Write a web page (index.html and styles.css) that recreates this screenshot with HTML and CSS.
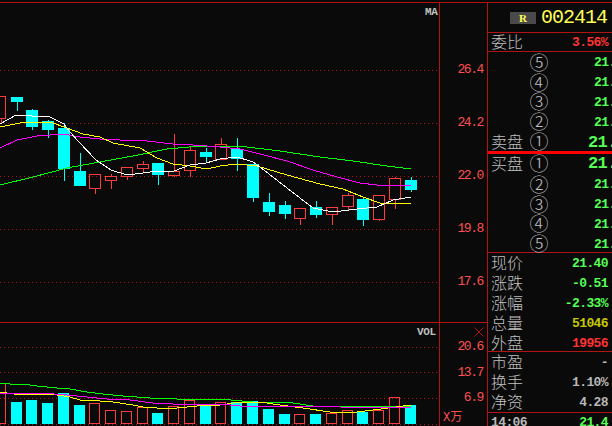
FILE: index.html
```html
<!DOCTYPE html>
<html lang="zh">
<head>
<meta charset="utf-8">
<title>002414</title>
<link rel="stylesheet" href="styles.css">
</head>
<body>
<div class="terminal">
  <div class="charts">
    <svg class="plot" width="439" height="423" viewBox="0 3 439 423">
      <g class="grid">
        <path d="M0 70.5H437M0 123.5H437M0 176.5H437M0 229.5H437M0 282.5H437"/>
        <path d="M0 347.5H437M0 372.5H437M0 398.5H437M0 424.5H437"/>
      </g>
      <path class="divider" d="M0 322.5H439"/>
      <g class="candles">
        <rect class="up" x="-6.5" y="96.5" width="12" height="22"/><line class="wick-up" x1="1.5" y1="118" x2="1.5" y2="123"/>
        <rect class="down" x="11" y="97" width="12" height="5"/><line class="wick-down" x1="17.5" y1="102" x2="17.5" y2="111"/>
        <rect class="down" x="26" y="110" width="12" height="17"/><line class="wick-down" x1="32.5" y1="109" x2="32.5" y2="130"/>
        <rect class="down" x="42" y="121" width="12" height="9"/><line class="wick-down" x1="48.5" y1="120" x2="48.5" y2="138"/>
        <rect class="down" x="58" y="128" width="12" height="41"/><line class="wick-down" x1="64.5" y1="123" x2="64.5" y2="181"/>
        <rect class="down" x="74" y="171" width="12" height="15"/><line class="wick-down" x1="80.5" y1="153" x2="80.5" y2="186"/>
        <rect class="up" x="89.5" y="174.5" width="11" height="14"/><line class="wick-up" x1="95.5" y1="189" x2="95.5" y2="194"/>
        <rect class="up" x="105.5" y="176.5" width="11" height="4"/><line class="wick-up" x1="111.5" y1="174" x2="111.5" y2="176"/><line class="wick-up" x1="111.5" y1="181" x2="111.5" y2="189"/>
        <rect class="up" x="121.5" y="167.5" width="11" height="9"/><line class="wick-up" x1="127.5" y1="177" x2="127.5" y2="180"/>
        <rect class="up" x="137.5" y="164.5" width="11" height="4"/><line class="wick-up" x1="143.5" y1="161" x2="143.5" y2="164"/><line class="wick-up" x1="143.5" y1="169" x2="143.5" y2="172"/>
        <rect class="down" x="152" y="163" width="12" height="12"/><line class="wick-down" x1="158.5" y1="175" x2="158.5" y2="185"/>
        <rect class="up" x="168.5" y="171.5" width="11" height="4"/><line class="wick-up" x1="174.5" y1="134" x2="174.5" y2="171"/><line class="wick-up" x1="174.5" y1="176" x2="174.5" y2="177"/>
        <rect class="up" x="184.5" y="150.5" width="11" height="20"/><line class="wick-up" x1="190.5" y1="146" x2="190.5" y2="150"/><line class="wick-up" x1="190.5" y1="171" x2="190.5" y2="177"/>
        <rect class="down" x="200" y="152" width="12" height="5"/><line class="wick-down" x1="206.5" y1="148" x2="206.5" y2="162"/>
        <rect class="up" x="215.5" y="144.5" width="11" height="15"/><line class="wick-up" x1="221.5" y1="138" x2="221.5" y2="144"/>
        <rect class="down" x="231" y="149" width="12" height="10"/><line class="wick-down" x1="237.5" y1="138" x2="237.5" y2="171"/>
        <rect class="down" x="247" y="164" width="12" height="34"/><line class="wick-down" x1="253.5" y1="198" x2="253.5" y2="202"/>
        <rect class="down" x="263" y="202" width="12" height="10"/><line class="wick-down" x1="269.5" y1="193" x2="269.5" y2="216"/>
        <rect class="down" x="279" y="205" width="12" height="9"/><line class="wick-down" x1="285.5" y1="201" x2="285.5" y2="219"/>
        <rect class="up" x="294.5" y="208.5" width="11" height="10"/><line class="wick-up" x1="300.5" y1="219" x2="300.5" y2="225"/>
        <rect class="down" x="310" y="207" width="12" height="8"/><line class="wick-down" x1="316.5" y1="201" x2="316.5" y2="218"/>
        <rect class="up" x="326.5" y="207.5" width="11" height="7"/><line class="wick-up" x1="332.5" y1="215" x2="332.5" y2="225"/>
        <rect class="up" x="342.5" y="195.5" width="11" height="11"/><line class="wick-up" x1="348.5" y1="193" x2="348.5" y2="195"/><line class="wick-up" x1="348.5" y1="207" x2="348.5" y2="211"/>
        <rect class="down" x="357" y="199" width="12" height="21"/><line class="wick-down" x1="363.5" y1="197" x2="363.5" y2="226"/>
        <rect class="up" x="373.5" y="195.5" width="11" height="24"/><line class="wick-up" x1="379.5" y1="220" x2="379.5" y2="221"/>
        <rect class="up" x="389.5" y="178.5" width="11" height="21"/><line class="wick-up" x1="395.5" y1="177" x2="395.5" y2="178"/><line class="wick-up" x1="395.5" y1="200" x2="395.5" y2="209"/>
        <rect class="down" x="405" y="180" width="12" height="10"/><line class="wick-down" x1="411.5" y1="177" x2="411.5" y2="192"/>
      </g>
      <g class="averages">
        <polyline class="ma60" points="0,185 33,177 67,168 100,162 133,156 167,149 200,146 220,146 247,147 280,151 320,157 353,161 387,166 411,169"/>
        <polyline class="ma20" points="0,148 17,140 37,136 63,134 80,137 100,139 120,140 147,141 173,144 193,145 220,147 240,149 260,154 287,161 313,170 337,177 360,183 377,185 411,185"/>
        <polyline class="ma10" points="0,127 20,123 33,122 50,122 67,128 83,134 100,137 113,143 140,148 157,158 173,164 190,166 207,169 220,166 237,164 257,166 287,175 320,184 343,189 363,197 380,203 397,204 411,203"/>
        <polyline class="ma5" points="0,124 16,115 25,115 32,116 48,116 64,124 70,132 78,141 96,160 111,170 127,175 143,173 158,171 174,171 190,165 206,163 220,159 237,157 253,162 260,167 287,188 313,208 333,212 357,209 377,207 393,200 411,197"/>
      </g>
      <g class="candles">
        <rect class="up" x="-6.5" y="383.5" width="12" height="40"/>
        <rect class="down" x="11" y="402" width="11" height="22"/>
        <rect class="down" x="26" y="400" width="11" height="24"/>
        <rect class="down" x="42" y="403" width="11" height="21"/>
        <rect class="down" x="58" y="393" width="11" height="31"/>
        <rect class="down" x="74" y="405" width="11" height="19"/>
        <rect class="up" x="89.5" y="403.5" width="10" height="20"/>
        <rect class="up" x="105.5" y="410.5" width="10" height="13"/>
        <rect class="up" x="121.5" y="411.5" width="10" height="12"/>
        <rect class="up" x="137.5" y="407.5" width="10" height="16"/>
        <rect class="down" x="152" y="413" width="11" height="11"/>
        <rect class="up" x="168.5" y="406.5" width="10" height="17"/>
        <rect class="up" x="184.5" y="400.5" width="10" height="23"/>
        <rect class="down" x="200" y="405" width="11" height="19"/>
        <rect class="up" x="215.5" y="402.5" width="10" height="21"/>
        <rect class="down" x="231" y="402" width="11" height="22"/>
        <rect class="down" x="247" y="401" width="11" height="23"/>
        <rect class="down" x="263" y="409" width="11" height="15"/>
        <rect class="down" x="279" y="414" width="11" height="10"/>
        <rect class="up" x="294.5" y="414.5" width="10" height="9"/>
        <rect class="down" x="310" y="414" width="11" height="10"/>
        <rect class="up" x="326.5" y="413.5" width="10" height="10"/>
        <rect class="up" x="342.5" y="410.5" width="10" height="13"/>
        <rect class="down" x="357" y="412" width="11" height="12"/>
        <rect class="up" x="373.5" y="410.5" width="10" height="13"/>
        <rect class="up" x="389.5" y="397.5" width="10" height="26"/>
        <rect class="down" x="405" y="405" width="11" height="19"/>
      </g>
      <g class="averages">
        <polyline class="ma60" points="0,383 10,384 23,384 37,386 57,388 70,389 87,392 103,394 123,396 150,398 177,399 220,399 253,402 293,403 313,406 373,407 411,406"/>
        <polyline class="ma10" points="0,392 13,394 57,395 70,397 80,400 100,401 113,402 133,405 143,407 157,408 177,408 197,406 220,405 240,402 260,402 280,405 303,408 330,412 357,412 373,410 411,405"/>
        <polyline class="ma20" points="0,393 40,393 67,395 87,397 107,399 130,400 153,403 173,404 220,404 240,406 293,406 340,407 411,408"/>
      </g>
      <text class="plot-label" x="425" y="15">MA</text>
      <text class="plot-label" x="417" y="335">VOL</text>
    </svg>
  </div>

  <div class="axis">
    <div class="axis-price">
      <span class="tick">26.4</span>
      <span class="tick">24.2</span>
      <span class="tick">22.0</span>
      <span class="tick">19.8</span>
      <span class="tick">17.6</span>
    </div>
    <div class="axis-volume">
      <svg class="close-mark" width="10" height="10" viewBox="0 0 10 10"><path d="M0.5 0.5L9.5 9.5M9.5 0.5L0.5 9.5"/></svg>
      <span class="tick tick-volume">20.6</span>
      <span class="tick tick-volume">13.7</span>
      <span class="tick tick-volume">6.9</span>
      <span class="unit">X万</span>
    </div>
  </div>

  <div class="panel">
    <div class="title">
      <span class="badge">R</span>
      <span class="code">002414</span>
    </div>
    <div class="row row-ratio"><span class="label">委比</span><span class="num red">3.56%</span></div>
    <div class="book book-sell">
      <div class="level"><span class="label"></span><span class="circle">⑤</span><span class="price">21.</span></div>
      <div class="level"><span class="label"></span><span class="circle">④</span><span class="price">21.</span></div>
      <div class="level"><span class="label"></span><span class="circle">③</span><span class="price">21.</span></div>
      <div class="level"><span class="label"></span><span class="circle">②</span><span class="price">21.</span></div>
      <div class="level"><span class="label">卖盘</span><span class="circle">①</span><span class="price best">21.</span></div>
    </div>
    <div class="book book-buy">
      <div class="level"><span class="label">买盘</span><span class="circle">①</span><span class="price best">21.</span></div>
      <div class="level"><span class="label"></span><span class="circle">②</span><span class="price">21.</span></div>
      <div class="level"><span class="label"></span><span class="circle">③</span><span class="price">21.</span></div>
      <div class="level"><span class="label"></span><span class="circle">④</span><span class="price">21.</span></div>
      <div class="level"><span class="label"></span><span class="circle">⑤</span><span class="price">21.</span></div>
    </div>
    <div class="stats">
      <div class="row"><span class="label">现价</span><span class="num green">21.40</span></div>
      <div class="row"><span class="label">涨跌</span><span class="num green">-0.51</span></div>
      <div class="row"><span class="label">涨幅</span><span class="num green">-2.33%</span></div>
      <div class="row"><span class="label">总量</span><span class="num olive">51046</span></div>
      <div class="row"><span class="label">外盘</span><span class="num red">19956</span></div>
    </div>
    <div class="stats stats-short">
      <div class="row"><span class="label">市盈</span><span class="num grey">-</span></div>
      <div class="row"><span class="label">换手</span><span class="num grey">1.10%</span></div>
      <div class="row"><span class="label">净资</span><span class="num grey">4.28</span></div>
    </div>
    <div class="row row-tick"><span class="num grey">14:06</span><span class="num green">21.4</span></div>
  </div>
</div>
</body>
</html>
```
FILE: styles.css
```css
* { box-sizing: border-box; }
html, body { margin: 0; height: 100%; background: #0a0a0a; overflow: hidden; }
body { padding-top: 2px; }

.terminal {
  display: flex;
  width: 612px;
  height: 424px;
  border-top: 1px solid #b01414;
  overflow: hidden;
  font-family: "Liberation Mono", monospace;
}

/* charts */
.charts { flex: 0 0 439px; height: 423px; }
.plot { display: block; shape-rendering: crispEdges; }
.grid path { fill: none; stroke: #b01414; stroke-dasharray: 1 3; }
.divider { fill: none; stroke: #b01414; }
.up { fill: none; stroke: #ff3c3c; }
.down { fill: #00ffff; }
.wick-up { stroke: #ff3c3c; }
.wick-down { stroke: #00ffff; }
.averages polyline { fill: none; stroke-width: 1; }
.ma5 { stroke: #ffffff; }
.ma10 { stroke: #ffff00; }
.ma20 { stroke: #ff00ff; }
.ma60 { stroke: #00ff00; }
.plot-label { font-family: "Liberation Mono", monospace; font-size: 11px; font-weight: 700; fill: #c0c0c0; letter-spacing: -0.4px; }

/* axis */
.axis {
  flex: 0 0 49px;
  height: 423px;
  border-left: 1px solid #b01414;
  border-right: 1px solid #b01414;
  display: flex;
  flex-direction: column;
}
.axis-price {
  flex: 0 0 320px;
  padding-top: 40px;
  border-bottom: 1px solid #b01414;
  display: flex;
  flex-direction: column;
}
.axis-volume {
  position: relative;
  flex: 1;
  padding-top: 11px;
  display: flex;
  flex-direction: column;
}
.tick {
  flex: 0 0 53px;
  display: flex;
  align-items: center;
  justify-content: flex-end;
  padding-right: 4px;
  font-size: 13px;
  letter-spacing: -1.4px;
  color: #ff5050;
}
.tick-volume { flex-basis: 25.5px; }
.close-mark { position: absolute; top: 4px; right: 3px; }
.close-mark path { fill: none; stroke: #b01414; }
.unit {
  margin-top: 1px;
  padding-left: 3px;
  font-family: "Liberation Mono", "Noto Sans CJK SC", monospace;
  font-size: 12px;
  line-height: 13px;
  color: #ff5050;
  white-space: nowrap;
}

/* quote panel */
.panel { flex: 0 0 124px; min-width: 0; color: #c0c0c0; }
.title {
  height: 29px;
  display: flex;
  align-items: center;
  justify-content: flex-end;
  gap: 5px;
  padding-right: 5px;
}
.badge {
  width: 26px;
  height: 12px;
  background: #4a4a4a;
  color: #ffff55;
  font: 700 11px/12px "Liberation Serif", serif;
  text-align: center;
}
.code { font-size: 20px; line-height: 24px; color: #ffff55; letter-spacing: -1px; }

.row {
  height: 20px;
  display: flex;
  align-items: center;
  justify-content: space-between;
  padding: 0 4px 0 3px;
}
.row-ratio { height: 19px; border-top: 1px solid #b01414; }
.label {
  margin-top: -2px;
  font-family: "Noto Sans CJK SC", sans-serif;
  font-size: 16px;
  font-weight: 300;
  line-height: 20px;
  white-space: nowrap;
  color: #c0c0c0;
}
.num { font-size: 13px; font-weight: 700; letter-spacing: -0.6px; }
.red { color: #ff3232; }
.green { color: #55ff55; }
.olive { color: #c8c800; }
.grey { color: #b8b8b8; }

.book { display: flex; flex-direction: column; }
.book-sell { height: 100px; padding-top: 1px; border-top: 1px solid #b01414; }
.book-buy { height: 101px; border-top: 3px solid #ff0000; }
.level { flex: 0 0 19.8px; display: flex; align-items: center; padding-left: 3px; }
.book-buy .level:first-child { flex-basis: 16px; margin-bottom: 2px; }
.level .label { flex: 0 0 40px; }
.circle {
  flex: 0 0 16px;
  min-width: 0;
  display: flex;
  justify-content: center;
  margin-top: -2px;
  font-family: "Noto Sans CJK SC", sans-serif;
  font-size: 19px;
  font-weight: 300;
  line-height: 20px;
}
.price { margin-left: 47px; font-size: 13px; font-weight: 700; letter-spacing: -0.6px; color: #55ff55; }
.best { margin-left: 41px; font-size: 17px; letter-spacing: -0.6px; }

.stats { border-top: 1px solid #b01414; height: 99px; }
.stats-short { height: 61px; }
.row-tick { border-top: 1px solid #b01414; }
```
